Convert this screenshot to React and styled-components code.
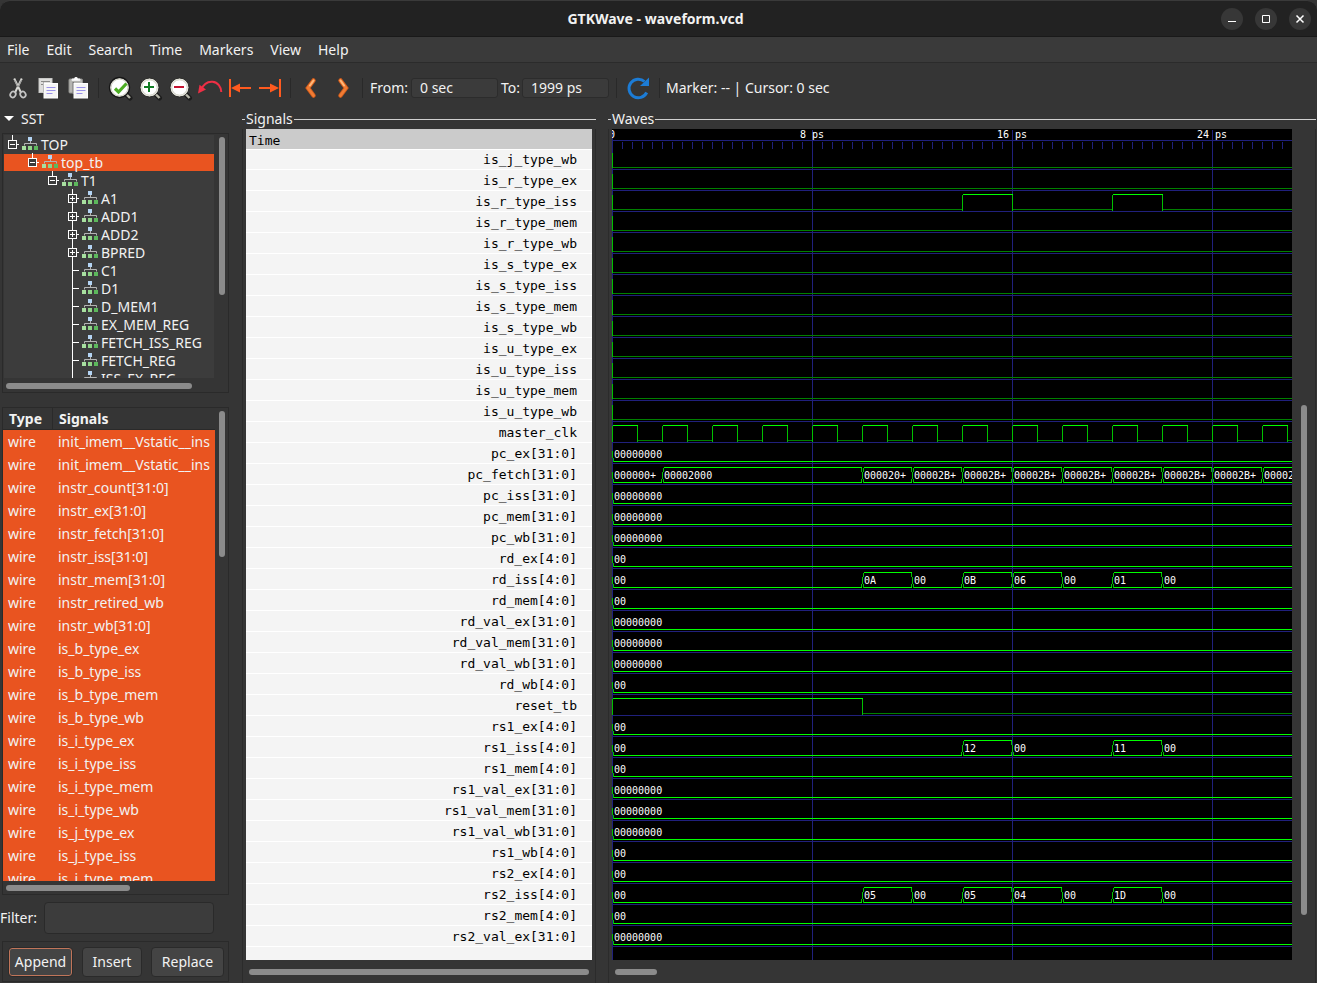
import React from "react";
import styled, { createGlobalStyle, css } from "styled-components";

const UI_FONT = '"Noto Sans", "Open Sans", sans-serif';
const MONO_FONT = '"DejaVu Sans Mono", "Liberation Mono", monospace';

const GlobalStyle = createGlobalStyle`
  * { box-sizing: border-box; }
  body {
    margin: 0;
    background: #353535;
    color: #f2f2f2;
    font-family: ${UI_FONT};
    font-size: 14px;
    line-height: 18px;
  }
  button, input { font: inherit; color: inherit; }
`;

const Window = styled.div`
  display: flex;
  flex-direction: column;
  height: 100vh;
  min-height: 700px;
  overflow: hidden;
`;

/* Title bar */

const TitleBar = styled.header`
  display: grid;
  grid-template-columns: 1fr auto 1fr;
  align-items: center;
  flex: none;
  height: 37px;
  padding-right: 6px;
  background: #222222;
  border-top: 1px solid #3a3a3a;
  border-bottom: 1px solid #191919;
  border-radius: 10px 10px 0 0;
`;

const Title = styled.h1`
  grid-column: 2;
  margin: 0;
  font-size: 14px;
  font-weight: 700;
`;

const WindowButtons = styled.div`
  display: flex;
  justify-content: flex-end;
  gap: 12px;
`;

const WindowButton = styled.button`
  display: grid;
  place-items: center;
  width: 22px;
  height: 22px;
  padding: 0;
  border: 0;
  border-radius: 50%;
  background: #373737;
`;

/* Menu and toolbar */

const MenuBar = styled.nav`
  display: flex;
  flex: none;
  gap: 17px;
  height: 26px;
  padding: 1px 7px 0;
  background: #3a3a3a;
  border-bottom: 1px solid #2b2b2b;
`;

const MenuButton = styled.button`
  padding: 0;
  border: 0;
  background: none;
`;

const ToolBar = styled.div`
  display: flex;
  align-items: center;
  flex: none;
  height: 46px;
  padding: 4px 3px 0;
  white-space: nowrap;
`;

const ToolButton = styled.button`
  display: grid;
  place-items: center;
  flex: none;
  width: ${(p) => (p.$wide ? 32 : 30)}px;
  height: 30px;
  padding: 0;
  border: 0;
  background: none;
`;

const Separator = styled.span`
  flex: none;
  width: 1px;
  height: 20px;
  margin-left: ${(p) => p.$before}px;
  margin-right: ${(p) => p.$after}px;
  background: #292929;
`;

const RangeLabel = styled.label`
  flex: none;
  width: ${(p) => p.$width}px;
`;

const RangeInput = styled.input`
  flex: none;
  width: 87px;
  height: 20px;
  margin-right: 3px;
  padding: 0 8px 2px;
  border: 1px solid #2c2c2c;
  border-radius: 3px;
  background: #3b3b3b;
`;

/* Panes */

const Main = styled.main`
  display: flex;
  flex: 1;
  min-height: 0;
`;

const SidePane = styled.aside`
  display: flex;
  flex-direction: column;
  flex: none;
  width: 229px;
  margin-right: 13px;
`;

const Expander = styled.button`
  display: flex;
  align-items: center;
  gap: 7px;
  height: 20px;
  margin-bottom: 4px;
  padding: 0 0 0 4px;
  border: 0;
  background: none;
`;

const Frame = styled.section`
  display: grid;
  grid-template-columns: minmax(0, 1fr) 13px;
  margin-left: 2px;
  border: 1px solid #2a2a2a;
`;

const TreeFrame = styled(Frame)`
  grid-template-rows: 244px 14px;
  flex: none;
  margin-bottom: 14px;
`;

const ListFrame = styled(Frame)`
  grid-template-rows: minmax(0, 1fr) 13px;
  flex: 1;
  min-height: 0;
`;

const Track = styled.div`
  display: flex;
  ${(p) =>
    p.$vertical
      ? css`
          justify-content: center;
          padding-top: ${p.$start}px;
          padding-left: 1px;
        `
      : css`
          align-items: center;
          padding-left: ${p.$start}px;
          padding-top: 1px;
        `}
`;

const Thumb = styled.div`
  flex: none;
  width: ${(p) => (p.$vertical ? "6px" : p.$length)};
  height: ${(p) => (p.$vertical ? p.$length : "6px")};
  border-radius: 3px;
  background: #8b8b8b;
`;

const Tree = styled.ul`
  margin: 1px 1px 0 1px;
  padding: 1px 0 0;
  overflow: hidden;
  list-style: none;
  background: #3c3c3c;
`;

const TreeRow = styled.li`
  display: flex;
  height: 18px;
  padding-left: ${(p) => p.$depth * 20}px;
  border-bottom: 1px solid transparent;
  background: ${(p) => (p.$selected ? "#e95420" : "transparent")};
  background-clip: padding-box;
  white-space: nowrap;

  svg {
    flex: none;
    overflow: visible;
  }
`;

const TableClip = styled.div`
  overflow: hidden;
`;

const FacsTable = styled.table`
  width: 100%;
  border-collapse: separate;
  border-spacing: 0;
  table-layout: fixed;
  text-align: left;

  th {
    height: 22px;
    padding: 0 6px;
    border-bottom: 1px solid #2a2a2a;
    line-height: 20px;
  }
  th:first-child {
    width: 50px;
    border-right: 1px solid #2a2a2a;
  }
  td {
    height: 23px;
    padding: 0 5px;
    overflow: hidden;
    background: #e95420;
    white-space: nowrap;
  }
`;

const FilterRow = styled.div`
  display: flex;
  align-items: center;
  flex: none;
  margin: 7px 15px 7px 0;
`;

const FilterLabel = styled.label`
  width: 44px;
`;

const FilterInput = styled.input`
  flex: 1;
  min-width: 0;
  height: 32px;
  padding: 0 8px;
  border: 1px solid #2a2a2a;
  border-radius: 4px;
  background: #3c3c3c;
`;

const Actions = styled.div`
  display: flex;
  justify-content: space-between;
  flex: none;
  height: 41px;
  margin: 0 0 1px 2px;
  padding: 5px 4px 4px 5px;
  border: 1px solid #2a2a2a;
`;

const ActionButton = styled.button`
  width: ${(p) => p.$width}px;
  height: 30px;
  padding: 0;
  border: 1px solid #2a2a2a;
  border-radius: 4px;
  background: #444444;
  ${(p) =>
    p.$focused &&
    css`
      box-shadow: inset 0 0 0 1px #c0755a;
    `}
`;

const Pane = styled.section`
  display: flex;
  flex-direction: column;
  ${(p) =>
    p.$grow
      ? css`
          flex: 1;
          min-width: 0;
          margin-right: 1px;
        `
      : css`
          flex: none;
          width: 354px;
          margin-right: 12px;
        `}
`;

const PaneTitle = styled.h2`
  display: flex;
  align-items: center;
  flex: none;
  gap: 1px;
  height: 20px;
  margin: 0;
  font-size: 14px;
  font-weight: 400;

  &::before,
  &::after {
    content: "";
    width: 3px;
    height: 1px;
    background: #d0d0d0;
  }
  &::after {
    flex: 1;
  }
`;

const PaneBody = styled.div`
  display: grid;
  grid-template-columns: minmax(0, 1fr) ${(p) => p.$side}px;
  grid-template-rows: minmax(0, 1fr) 23px;
  flex: 1;
  min-height: 0;
  padding-left: 3px;
  border: solid #2b2b2b;
  border-width: 0 1px;
`;

const SignalPanel = styled.div`
  overflow: hidden;
  background: #f4f4f4;
  color: #000000;
  font-family: ${MONO_FONT};
  font-size: 13px;
`;

const TimeHeader = styled.div`
  height: 20px;
  padding-left: 3px;
  background: #cbcbcb;
  line-height: 24px;
`;

const SignalList = styled.ul`
  margin: 0;
  padding: 0;
  border-top: 1px solid #ffffff;
  list-style: none;
`;

const SignalRow = styled.li`
  height: 21px;
  padding-right: 15px;
  border-bottom: 1px solid #ffffff;
  line-height: 22px;
  text-align: right;

  &:first-child {
    height: 20px;
    line-height: 20px;
  }
`;

const WaveCanvas = styled.svg`
  display: block;
  width: 100%;
  height: 100%;
  overflow: hidden;
  background: #000000;
  font-family: ${MONO_FONT};
  font-size: 10px;
`;

/* Data */

const tree = [
  ["TOP", 0, "open"],
  ["top_tb", 1, "open"],
  ["T1", 2, "open"],
  ["A1", 3, "closed"],
  ["ADD1", 3, "closed"],
  ["ADD2", 3, "closed"],
  ["BPRED", 3, "closed"],
  ["C1", 3],
  ["D1", 3],
  ["D_MEM1", 3],
  ["EX_MEM_REG", 3],
  ["FETCH_ISS_REG", 3],
  ["FETCH_REG", 3],
  ["ISS_EX_REG", 3],
];

const facs = [
  "init_imem__Vstatic__ins",
  "init_imem__Vstatic__ins",
  "instr_count[31:0]",
  "instr_ex[31:0]",
  "instr_fetch[31:0]",
  "instr_iss[31:0]",
  "instr_mem[31:0]",
  "instr_retired_wb",
  "instr_wb[31:0]",
  "is_b_type_ex",
  "is_b_type_iss",
  "is_b_type_mem",
  "is_b_type_wb",
  "is_i_type_ex",
  "is_i_type_iss",
  "is_i_type_mem",
  "is_i_type_wb",
  "is_j_type_ex",
  "is_j_type_iss",
  "is_j_type_mem",
];

const UNIT = 25; // pixels per picosecond
const END = 160;

const bit = (name, ...highs) => ({ name, kind: "bit", highs });
const bus = (name, ...values) => ({ name, kind: "bus", values });
const word = (name) => bus(name, [0, "00000000"]);
const reg = (name, ...more) => bus(name, [0, "00"], ...more);

const signals = [
  bit("is_j_type_wb"),
  bit("is_r_type_ex"),
  bit("is_r_type_iss", [14, 16], [20, 22]),
  bit("is_r_type_mem"),
  bit("is_r_type_wb"),
  bit("is_s_type_ex"),
  bit("is_s_type_iss"),
  bit("is_s_type_mem"),
  bit("is_s_type_wb"),
  bit("is_u_type_ex"),
  bit("is_u_type_iss"),
  bit("is_u_type_mem"),
  bit("is_u_type_wb"),
  bit("master_clk", ...Array.from({ length: 80 }, (_, i) => [i * 2, i * 2 + 1])),
  word("pc_ex[31:0]"),
  bus(
    "pc_fetch[31:0]",
    [0, "000000+"],
    [2, "00002000"],
    [10, "000020+"],
    ...[12, 14, 16, 18, 20, 22, 24, 26].map((t) => [t, "00002B+"])
  ),
  word("pc_iss[31:0]"),
  word("pc_mem[31:0]"),
  word("pc_wb[31:0]"),
  reg("rd_ex[4:0]"),
  reg("rd_iss[4:0]", [10, "0A"], [12, "00"], [14, "0B"], [16, "06"], [18, "00"], [20, "01"], [22, "00"]),
  reg("rd_mem[4:0]"),
  word("rd_val_ex[31:0]"),
  word("rd_val_mem[31:0]"),
  word("rd_val_wb[31:0]"),
  reg("rd_wb[4:0]"),
  bit("reset_tb", [0, 10]),
  reg("rs1_ex[4:0]"),
  reg("rs1_iss[4:0]", [14, "12"], [16, "00"], [20, "11"], [22, "00"]),
  reg("rs1_mem[4:0]"),
  word("rs1_val_ex[31:0]"),
  word("rs1_val_mem[31:0]"),
  word("rs1_val_wb[31:0]"),
  reg("rs1_wb[4:0]"),
  reg("rs2_ex[4:0]"),
  reg("rs2_iss[4:0]", [10, "05"], [12, "00"], [14, "05"], [16, "04"], [18, "00"], [20, "1D"], [22, "00"]),
  reg("rs2_mem[4:0]"),
  word("rs2_val_ex[31:0]"),
];

/* Waves */

const HIGH = 23;
const LOW = 38;
const ROW = 21;

function BitWave({ highs }) {
  let high = "";
  let low = "";
  let edges = `M0 ${HIGH}V${LOW}`;
  let at = 0;
  highs.forEach(([from, to]) => {
    const a = from * UNIT;
    const b = to * UNIT;
    if (a > at) low += `M${at} ${LOW}H${a}`;
    high += `M${a} ${HIGH}H${b}`;
    edges += `M${a} ${HIGH}V${LOW + 1}M${b} ${HIGH}V${LOW + 1}`;
    at = b;
  });
  low += `M${at} ${LOW}H${END * UNIT}`;
  return (
    <>
      <path d={low} stroke="#008000" />
      <path d={edges} stroke="#00c000" />
      <path d={high} stroke="#00ff00" />
    </>
  );
}

const isZero = (value) => /^0+\+?$/.test(value);

function BusWave({ values }) {
  let lines = "";
  let edges = "";
  values.forEach(([t, value], i) => {
    const x = t * UNIT;
    const end = i + 1 < values.length ? values[i + 1][0] * UNIT : END * UNIT;
    const zero = isZero(value);
    lines += `M${x + 1} ${LOW}H${end - 1}`;
    if (!zero) lines += `M${x + 1} ${HIGH}H${end - 1}`;
    edges += `M${x} ${HIGH + 4}v7M${x + 1} ${HIGH + 11}V${LOW}`;
    if (!zero) edges += `M${x + 1} ${HIGH}v4`;
    if (i > 0) {
      edges += `M${x - 1} ${HIGH + 11}V${LOW}`;
      if (!isZero(values[i - 1][1])) edges += `M${x - 1} ${HIGH}v4`;
    }
  });
  return (
    <>
      <path d={edges} stroke="#00c000" />
      <path d={lines} stroke="#00ff00" />
      {values.map(([t, value]) => (
        <text key={t} x={t * UNIT + 2} y={LOW - 3} fill="#ffffff">
          {value}
        </text>
      ))}
    </>
  );
}

function Waves() {
  let ticks = "";
  for (let x = 0; x < END * UNIT; x += 10) ticks += `M${x} 12v7`;
  const marks = Array.from({ length: 20 }, (_, i) => i * 8);
  return (
    <WaveCanvas role="img" aria-label="Waves">
      <g fill="none" stroke="#20207c" shapeRendering="crispEdges" transform="translate(0.5 0.5)">
        <path d={`M0 11H${END * UNIT}${ticks}`} />
        {marks.map((t) => (
          <line key={t} x1={t * UNIT} x2={t * UNIT} y1="0" y2="100%" />
        ))}
        {signals.map((s, i) => (
          <path key={s.name} d={`M0 ${40 + i * ROW}H${END * UNIT}`} />
        ))}
      </g>
      {marks.map((t) => (
        <text key={t} x={t * UNIT} y="9" textAnchor="middle" fill="#ffffff">
          {t === 0 ? "0" : `${t} ps`}
        </text>
      ))}
      {signals.map((s, i) => (
        <g key={s.name} transform={`translate(0 ${i * ROW})`}>
          <WaveShape signal={s} />
        </g>
      ))}
    </WaveCanvas>
  );
}

const Crisp = styled.g`
  path {
    fill: none;
    shape-rendering: crispEdges;
    transform: translate(0.5px, 0.5px);
  }
`;

function WaveShape({ signal }) {
  return (
    <Crisp>
      {signal.kind === "bit" ? <BitWave highs={signal.highs} /> : <BusWave values={signal.values} />}
    </Crisp>
  );
}

/* Icons */

const Icon = ({ children, size = 26 }) => (
  <svg width={size} height={size} viewBox={`0 0 ${size} ${size}`} fill="none" aria-hidden="true">
    {children}
  </svg>
);

const CutIcon = () => (
  <Icon>
    <path d="M9.200 3.500L15.700 17M16.800 3.500L10.300 17" stroke="#d8d8d4" strokeWidth="2" />
    <path d="M9.500 5l3.500 7M16.500 5l-3.500 7" stroke="#777" strokeWidth="0.700" />
    <ellipse cx="8" cy="19.500" rx="2.600" ry="3" transform="rotate(35 8 19.500)" stroke="#c4c4c4" strokeWidth="1.700" />
    <ellipse cx="18" cy="19.500" rx="2.600" ry="3" transform="rotate(-35 18 19.500)" stroke="#c4c4c4" strokeWidth="1.700" />
  </Icon>
);

const Page = () => (
  <>
    <rect x="9" y="8.500" width="13.500" height="14.500" fill="#f5f5f5" stroke="#fff" />
    <path d="M11.500 12.500h9M11.500 15.500h9M11.500 18.500h6" stroke="#9a92e8" />
  </>
);

const CopyIcon = () => (
  <Icon>
    <rect x="4" y="3.500" width="13" height="14" fill="#dededc" stroke="#c8c8c6" />
    <path d="M6 6.500h9M6 9.500h9" stroke="#8b8b89" />
    <rect x="8" y="7.500" width="1" height="10" fill="#777" />
    <Page />
  </Icon>
);

const PasteIcon = () => (
  <Icon>
    <rect x="4" y="4" width="13.500" height="14" rx="1" fill="#b5b5b1" stroke="#8f8f8c" />
    <path d="M7 5.500V4h2l1-1.500h2L13 4h2v1.500z" fill="#fff" stroke="#eee" />
    <rect x="7.500" y="7" width="1.500" height="12" fill="#777" />
    <Page />
  </Icon>
);

const Lens = ({ children }) => (
  <Icon>
    <path d="M18.500 19l4 4" stroke="#1d1d1d" strokeWidth="5" strokeLinecap="round" />
    <path d="M18 18.500l4.500 4.500" stroke="#b9b9ac" strokeWidth="2.400" />
    <circle cx="12.500" cy="12.500" r="9.500" fill="#ededE6" stroke="#2b2b28" />
    <circle cx="12.500" cy="12.500" r="7.700" fill="#fff" stroke="#d2d2c6" />
    {children}
  </Icon>
);

const ZoomFitIcon = () => (
  <Icon>
    <path d="M19 19l4 4" stroke="#1d1d1d" strokeWidth="5" strokeLinecap="round" />
    <path d="M18.500 18.500l4.500 4.500" stroke="#b9b9ac" strokeWidth="2.400" />
    <circle cx="12.500" cy="12.500" r="10" fill="#e8e8e0" stroke="#161616" strokeWidth="1.300" />
    <circle cx="12.500" cy="12.500" r="8.400" fill="#fff" stroke="#d2d2c6" />
    <path d="M8 13.500l3.500 3.500 8-8.500" stroke="#4dae24" strokeWidth="3.200" />
  </Icon>
);

const ZoomInIcon = () => (
  <Lens>
    <path d="M12 7v10M7 12h10" stroke="#107c22" strokeWidth="2" />
  </Lens>
);

const ZoomOutIcon = () => (
  <Lens>
    <path d="M7 12h10" stroke="#c4122f" strokeWidth="2" />
  </Lens>
);

const UndoIcon = () => (
  <Icon>
    <path d="M4 15C7 8 12 6.500 15.500 6.800C21 7.200 24 12 24.300 17" stroke="#ee2f45" strokeWidth="2" />
    <path d="M1 18.500L2.500 9.800L9 14.500z" fill="#ee2f45" />
  </Icon>
);

const ToStartIcon = () => (
  <Icon>
    <path d="M3 4v18M10 13h14" stroke="#ff5a1f" strokeWidth="2" />
    <path d="M4 13l9-4.500v9z" fill="#ff5a1f" />
  </Icon>
);

const ToEndIcon = () => (
  <Icon>
    <path d="M23 4v18M2 13h13" stroke="#ff5a1f" strokeWidth="2" />
    <path d="M22 13l-9-4.500v9z" fill="#ff5a1f" />
  </Icon>
);

const PrevIcon = () => (
  <Icon>
    <path d="M15.500 5.500L10 13l5.500 7.500" stroke="#cf5a1a" strokeWidth="4.500" strokeLinecap="round" />
    <path d="M15.500 5.500L10 13l5.500 7.500" stroke="#f07c34" strokeWidth="2.800" strokeLinecap="round" />
    <path d="M15.500 5.500L12 10.500" stroke="#ffb878" strokeWidth="2" strokeLinecap="round" />
  </Icon>
);

const NextIcon = () => (
  <Icon>
    <path d="M10.500 5.500L16 13l-5.500 7.500" stroke="#cf5a1a" strokeWidth="4.500" strokeLinecap="round" />
    <path d="M10.500 5.500L16 13l-5.500 7.500" stroke="#f07c34" strokeWidth="2.800" strokeLinecap="round" />
    <path d="M10.500 5.500L14 10.500" stroke="#ffb878" strokeWidth="2" strokeLinecap="round" />
  </Icon>
);

const ReloadIcon = () => (
  <Icon>
    <path d="M21.700 17.500A9.300 9.300 0 1 1 19.500 6.500" stroke="#1c7cd6" strokeWidth="3" />
    <path d="M24 2.500V11h-9z" fill="#1c7cd6" />
  </Icon>
);

const Branch = ({ state, nested }) => (
  <svg width="18" height="18" shapeRendering="crispEdges" aria-hidden="true">
    <path d={nested ? "M8.500 -1V18" : "M8.500 -1V4"} stroke="#fff" />
    {state ? (
      <>
        <rect x="4.500" y="4.500" width="8" height="8" fill="#3c3c3c" stroke="#fff" />
        <path d="M6 8.500h5M13 8.500h2" stroke="#fff" />
        {state === "closed" && <path d="M8.500 6v5" stroke="#fff" />}
      </>
    ) : (
      <path d="M8 8.500h7" stroke="#fff" />
    )}
  </svg>
);

const ModuleIcon = () => (
  <svg width="19" height="18" aria-hidden="true">
    <path d="M8.500 5v3M2.500 9.500v-2h12v2" stroke="#b4b4b4" fill="none" />
    <rect x="6" y="1" width="4" height="4" fill="#b4d4f4" />
    <rect x="0" y="10" width="4" height="4" fill="#a8e0a0" />
    <rect x="6" y="10" width="4" height="4" fill="#8fd488" />
    <rect x="12" y="10" width="4" height="4" fill="#5cb85c" />
  </svg>
);

/* Application */

const menus = ["File", "Edit", "Search", "Time", "Markers", "View", "Help"];

const editTools = [
  ["Cut", CutIcon],
  ["Copy", CopyIcon],
  ["Paste", PasteIcon],
];
const zoomTools = [
  ["Zoom Fit", ZoomFitIcon],
  ["Zoom In", ZoomInIcon],
  ["Zoom Out", ZoomOutIcon],
  ["Zoom Undo", UndoIcon],
  ["Zoom to Start", ToStartIcon],
  ["Zoom to End", ToEndIcon],
];
const edgeTools = [
  ["Find Previous Edge", PrevIcon],
  ["Find Next Edge", NextIcon],
];

const Tools = ({ items, wide }) =>
  items.map(([label, Glyph]) => (
    <ToolButton key={label} type="button" aria-label={label} $wide={wide}>
      <Glyph />
    </ToolButton>
  ));

export default function App() {
  return (
    <Window>
      <GlobalStyle />
      <TitleBar>
        <Title>GTKWave - waveform.vcd</Title>
        <WindowButtons>
          <WindowButton type="button" aria-label="Minimize">
            <Icon size={10}><path d="M1 7.500h8" stroke="#fff" /></Icon>
          </WindowButton>
          <WindowButton type="button" aria-label="Maximize">
            <Icon size={10}><path d="M1.500 1.500h7v7h-7z" stroke="#fff" /></Icon>
          </WindowButton>
          <WindowButton type="button" aria-label="Close">
            <Icon size={10}><path d="M1.500 1.500l7 7M8.500 1.500l-7 7" stroke="#fff" strokeWidth="1.500" /></Icon>
          </WindowButton>
        </WindowButtons>
      </TitleBar>

      <MenuBar>
        {menus.map((m) => (
          <MenuButton key={m} type="button">{m}</MenuButton>
        ))}
      </MenuBar>

      <ToolBar>
        <Tools items={editTools} />
        <Separator $before={5} $after={6} />
        <Tools items={zoomTools} />
        <Separator $before={5} $after={4} />
        <Tools items={edgeTools} wide />
        <Separator $before={3} $after={7} />
        <RangeLabel htmlFor="from" $width={41}>From:</RangeLabel>
        <RangeInput id="from" defaultValue="0 sec" />
        <RangeLabel htmlFor="to" $width={21}>To:</RangeLabel>
        <RangeInput id="to" defaultValue="1999 ps" />
        <Separator $before={4} $after={6} />
        <ToolButton type="button" aria-label="Reload"><ReloadIcon /></ToolButton>
        <Separator $before={6} $after={6} />
        <span>Marker: -- | Cursor: 0 sec</span>
      </ToolBar>

      <Main>
        <SidePane>
          <Expander type="button">
            <svg width="10" height="6" aria-hidden="true"><path d="M0 0h10L5 5z" fill="#fff" /></svg>
            SST
          </Expander>
          <TreeFrame>
            <Tree>
              {tree.map(([name, depth, state]) => (
                <TreeRow key={name} $depth={depth} $selected={name === "top_tb"}>
                  <Branch state={state} nested={depth === 3} />
                  <ModuleIcon />
                  {name}
                </TreeRow>
              ))}
            </Tree>
            <Track $vertical $start={3}><Thumb $vertical $length="158px" /></Track>
            <Track $start={3}><Thumb $length="186px" /></Track>
          </TreeFrame>
          <ListFrame>
            <TableClip>
              <FacsTable>
                <thead>
                  <tr><th scope="col">Type</th><th scope="col">Signals</th></tr>
                </thead>
                <tbody>
                  {facs.map((f, i) => (
                    <tr key={i}><td>wire</td><td>{f}</td></tr>
                  ))}
                </tbody>
              </FacsTable>
            </TableClip>
            <Track $vertical $start={3}><Thumb $vertical $length="146px" /></Track>
            <Track $start={3}><Thumb $length="124px" /></Track>
          </ListFrame>
          <FilterRow>
            <FilterLabel htmlFor="filter">Filter:</FilterLabel>
            <FilterInput id="filter" />
          </FilterRow>
          <Actions>
            <ActionButton type="button" $width={65} $focused>Append</ActionButton>
            <ActionButton type="button" $width={60}>Insert</ActionButton>
            <ActionButton type="button" $width={73}>Replace</ActionButton>
          </Actions>
        </SidePane>

        <Pane>
          <PaneTitle>Signals</PaneTitle>
          <PaneBody $side={3}>
            <SignalPanel>
              <TimeHeader>Time</TimeHeader>
              <SignalList>
                {signals.map((s) => (
                  <SignalRow key={s.name}>{s.name}</SignalRow>
                ))}
              </SignalList>
            </SignalPanel>
            <span />
            <Track $start={3}><Thumb $length="340px" /></Track>
          </PaneBody>
        </Pane>

        <Pane $grow>
          <PaneTitle>Waves</PaneTitle>
          <PaneBody $side={23}>
            <Waves />
            <Track $vertical $start={276}><Thumb $vertical $length="510px" /></Track>
            <Track $start={3}><Thumb $length="42px" /></Track>
          </PaneBody>
        </Pane>
      </Main>
    </Window>
  );
}
